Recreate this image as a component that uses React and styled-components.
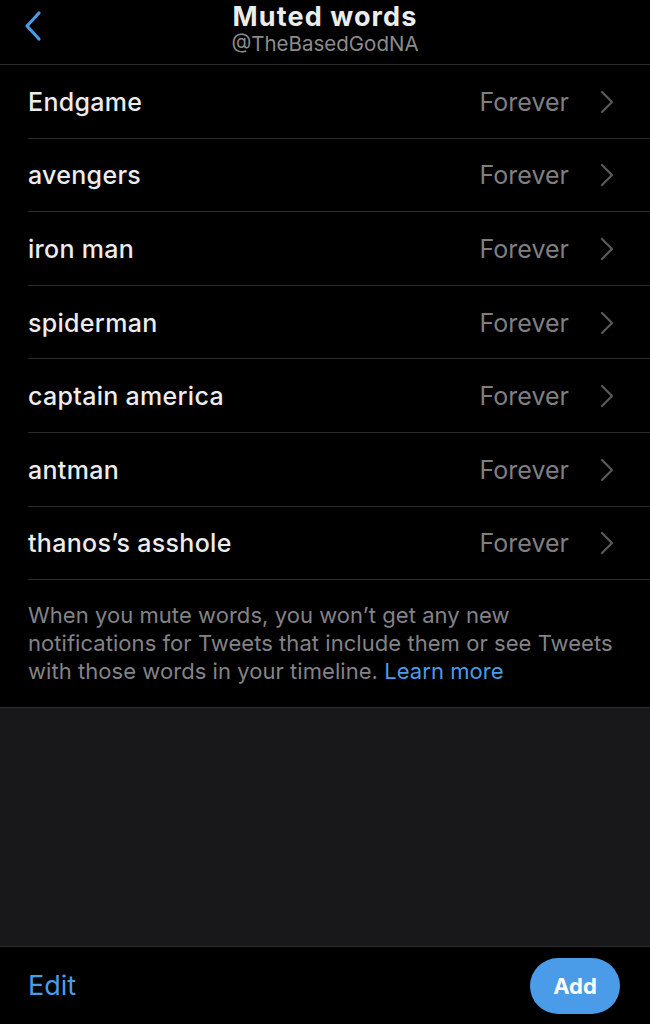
import React from "react";
import styled, { createGlobalStyle } from "styled-components";

const Global = createGlobalStyle`
  html, body { margin: 0; padding: 0; background: #000; }
  body { font-family: Inter, "Noto Sans", sans-serif; -webkit-font-smoothing: antialiased; }
  * { box-sizing: border-box; }
`;

const Page = styled.div`
  width: 650px;
  height: 1024px;
  display: flex;
  flex-direction: column;
  background: #000;
  color: #e9e9ea;
`;

const Header = styled.header`
  position: relative;
  height: 65px;
  flex: none;
  display: flex;
  flex-direction: column;
  align-items: center;
  border-bottom: 1px solid #2c2c2e;
`;

const BackButton = styled.div`
  position: absolute;
  left: 22px;
  top: 10px;
  width: 24px;
  height: 32px;
  display: flex;
`;

const Title = styled.div`
  font-size: 27px;
  font-weight: 700;
  line-height: 30px;
  margin-top: 2px;
  color: #ececec;
  letter-spacing: 1.1px;
`;

const Subtitle = styled.div`
  font-size: 20.5px;
  line-height: 24px;
  margin-top: 0px;
  color: #8b8b8e;
`;

const List = styled.div`
  display: flex;
  flex-direction: column;
  padding-left: 28px;
`;

const Row = styled.div`
  height: 73.6px;
  display: flex;
  align-items: center;
  border-bottom: 1px solid #2c2c2e;
  padding-right: 36px;
  padding-top: 1px;
`;

const Word = styled.div`
  flex: 1;
  font-size: 25px;
  font-weight: 500;
  letter-spacing: 0.3px;
  color: #ececec;
`;

const Duration = styled.div`
  font-size: 25px;
  color: #7f7f83;
  margin-right: 31px;
`;

const Chevron = styled.svg`
  width: 14px;
  height: 24px;
  flex: none;
`;

const Note = styled.div`
  padding: 21px 28px 22px 28px;
  font-size: 22px;
  line-height: 28px;
  letter-spacing: 0.05px;
  color: #838387;
  border-bottom: 1px solid #2c2c2e;
`;

const Link = styled.span`
  color: #4a9be8;
`;

const Filler = styled.div`
  flex: 1;
  background: #18181a;
  border-bottom: 1px solid #2c2c2e;
`;

const Footer = styled.footer`
  height: 77px;
  flex: none;
  display: flex;
  align-items: center;
  justify-content: space-between;
  padding: 0 30px 0 28px;
  background: #000;
`;

const EditButton = styled.div`
  font-size: 27px;
  color: #4a9be8;
`;

const AddButton = styled.div`
  width: 90px;
  height: 56px;
  border-radius: 28px;
  background: #4a9be8;
  color: #fff;
  font-size: 22px;
  font-weight: 700;
  display: flex;
  align-items: center;
  justify-content: center;
`;

const words = [
  "Endgame",
  "avengers",
  "iron man",
  "spiderman",
  "captain america",
  "antman",
  "thanos’s asshole",
];

export default function App() {
  return (
    <Page>
      <Global />
      <Header>
        <BackButton>
          <svg width="24" height="32" viewBox="0 0 24 32">
            <path d="M17 3 L5 16 L17 29" fill="none" stroke="#4a9be8" strokeWidth="3.2" strokeLinecap="round" strokeLinejoin="round" />
          </svg>
        </BackButton>
        <Title>Muted words</Title>
        <Subtitle>@TheBasedGodNA</Subtitle>
      </Header>
      <List>
        {words.map((w) => (
          <Row key={w}>
            <Word>{w}</Word>
            <Duration>Forever</Duration>
            <Chevron viewBox="0 0 14 24">
              <path d="M2 2 L12 12 L2 22" fill="none" stroke="#5a5a5e" strokeWidth="2.2" strokeLinecap="round" strokeLinejoin="round" />
            </Chevron>
          </Row>
        ))}
      </List>
      <Note>
        When you mute words, you won’t get any new notifications for Tweets that include them or see Tweets with those words in your timeline. <Link>Learn more</Link>
      </Note>
      <Filler />
      <Footer>
        <EditButton>Edit</EditButton>
        <AddButton>Add</AddButton>
      </Footer>
    </Page>
  );
}
